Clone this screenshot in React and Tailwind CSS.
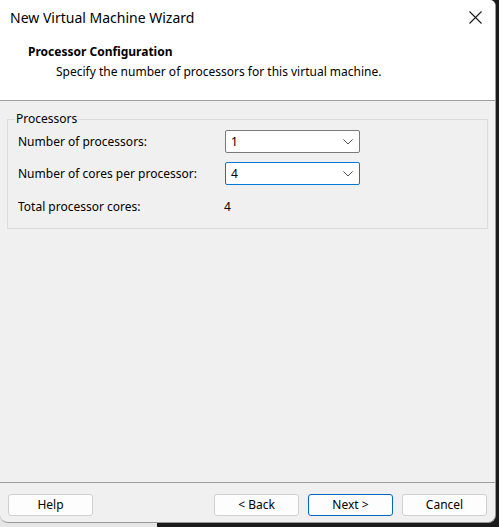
function Chevron() {
  return (
    <svg width="10" height="6" viewBox="0 0 10 6" className="text-[#505050]">
      <polyline points="0.5,0.5 5,5 9.5,0.5" fill="none" stroke="currentColor" strokeWidth="1" />
    </svg>
  );
}

function Select({ value, focused }) {
  return (
    <div
      className={
        "flex h-[23px] w-[135px] items-center justify-between rounded-[2px] border bg-white pl-[5px] pr-[6px] " +
        (focused ? "border-[#0078d7]" : "border-[#7a7a7a]")
      }
    >
      <span>{value}</span>
      <Chevron />
    </div>
  );
}

function Button({ children, primary }) {
  return (
    <button
      className={
        "h-[22px] w-[85px] rounded-[3px] border bg-[#fdfdfd] text-[12px] text-black " +
        (primary ? "border-[#0067c0]" : "border-[#d0d0d0]")
      }
    >
      {children}
    </button>
  );
}

function App() {
  return (
    <div
      className="h-[527px] w-[499px] overflow-hidden bg-[linear-gradient(to_right,#e6e6e6_157px,#1b1b1b_157px)] text-[12px] text-black"
      style={{ fontFamily: '"Noto Sans", "Open Sans", sans-serif' }}
    >
      <div className="flex h-[523px] w-[496px] flex-col overflow-hidden rounded-b-[8px] rounded-tr-[6px] border-r border-b border-[#9a9a9a] bg-[#f0f0f0]">
        {/* header */}
        <div className="h-[101px] border-b border-[#a0a0a0] bg-white">
          <div className="flex h-[34px] items-center justify-between pl-[10px] pr-[13px]">
            <span className="text-[14px]">New Virtual Machine Wizard</span>
            <svg width="13" height="13" viewBox="0 0 13 13">
              <path d="M0.5 0.5 L12.5 12.5 M12.5 0.5 L0.5 12.5" stroke="#1a1a1a" strokeWidth="1.1" />
            </svg>
          </div>
          <div className="pl-[28px] pt-[9px] font-bold leading-[18px]">
            Processor Configuration
          </div>
          <div className="pl-[56px] pt-[2px] leading-[18px]">
            Specify the number of processors for this virtual machine.
          </div>
        </div>

        {/* body */}
        <div className="flex-1 px-[7px] pt-[12px]">
          <fieldset className="h-[116px] w-[481px] border border-[#dcdcdc] pl-[10px] pr-0">
            <legend className="ml-[-3px] px-[1px] leading-[12px]">Processors</legend>
            <div className="mt-[5px] flex items-center">
              <span className="w-[207px]">Number of processors:</span>
              <Select value="1" />
            </div>
            <div className="mt-[9px] flex items-center">
              <span className="w-[207px]">Number of cores per processor:</span>
              <Select value="4" focused />
            </div>
            <div className="mt-[13px] flex items-center">
              <span className="w-[206px]">Total processor cores:</span>
              <span>4</span>
            </div>
          </fieldset>
        </div>

        {/* footer */}
        <div className="flex h-[40px] items-start border-t border-[#a0a0a0] pl-[8px] pt-[11px]">
          <Button>Help</Button>
          <div className="ml-[121px] flex gap-[9px]">
            <Button>&lt; Back</Button>
            <Button primary>Next &gt;</Button>
            <Button>Cancel</Button>
          </div>
        </div>
      </div>
    </div>
  );
}

export default App;
